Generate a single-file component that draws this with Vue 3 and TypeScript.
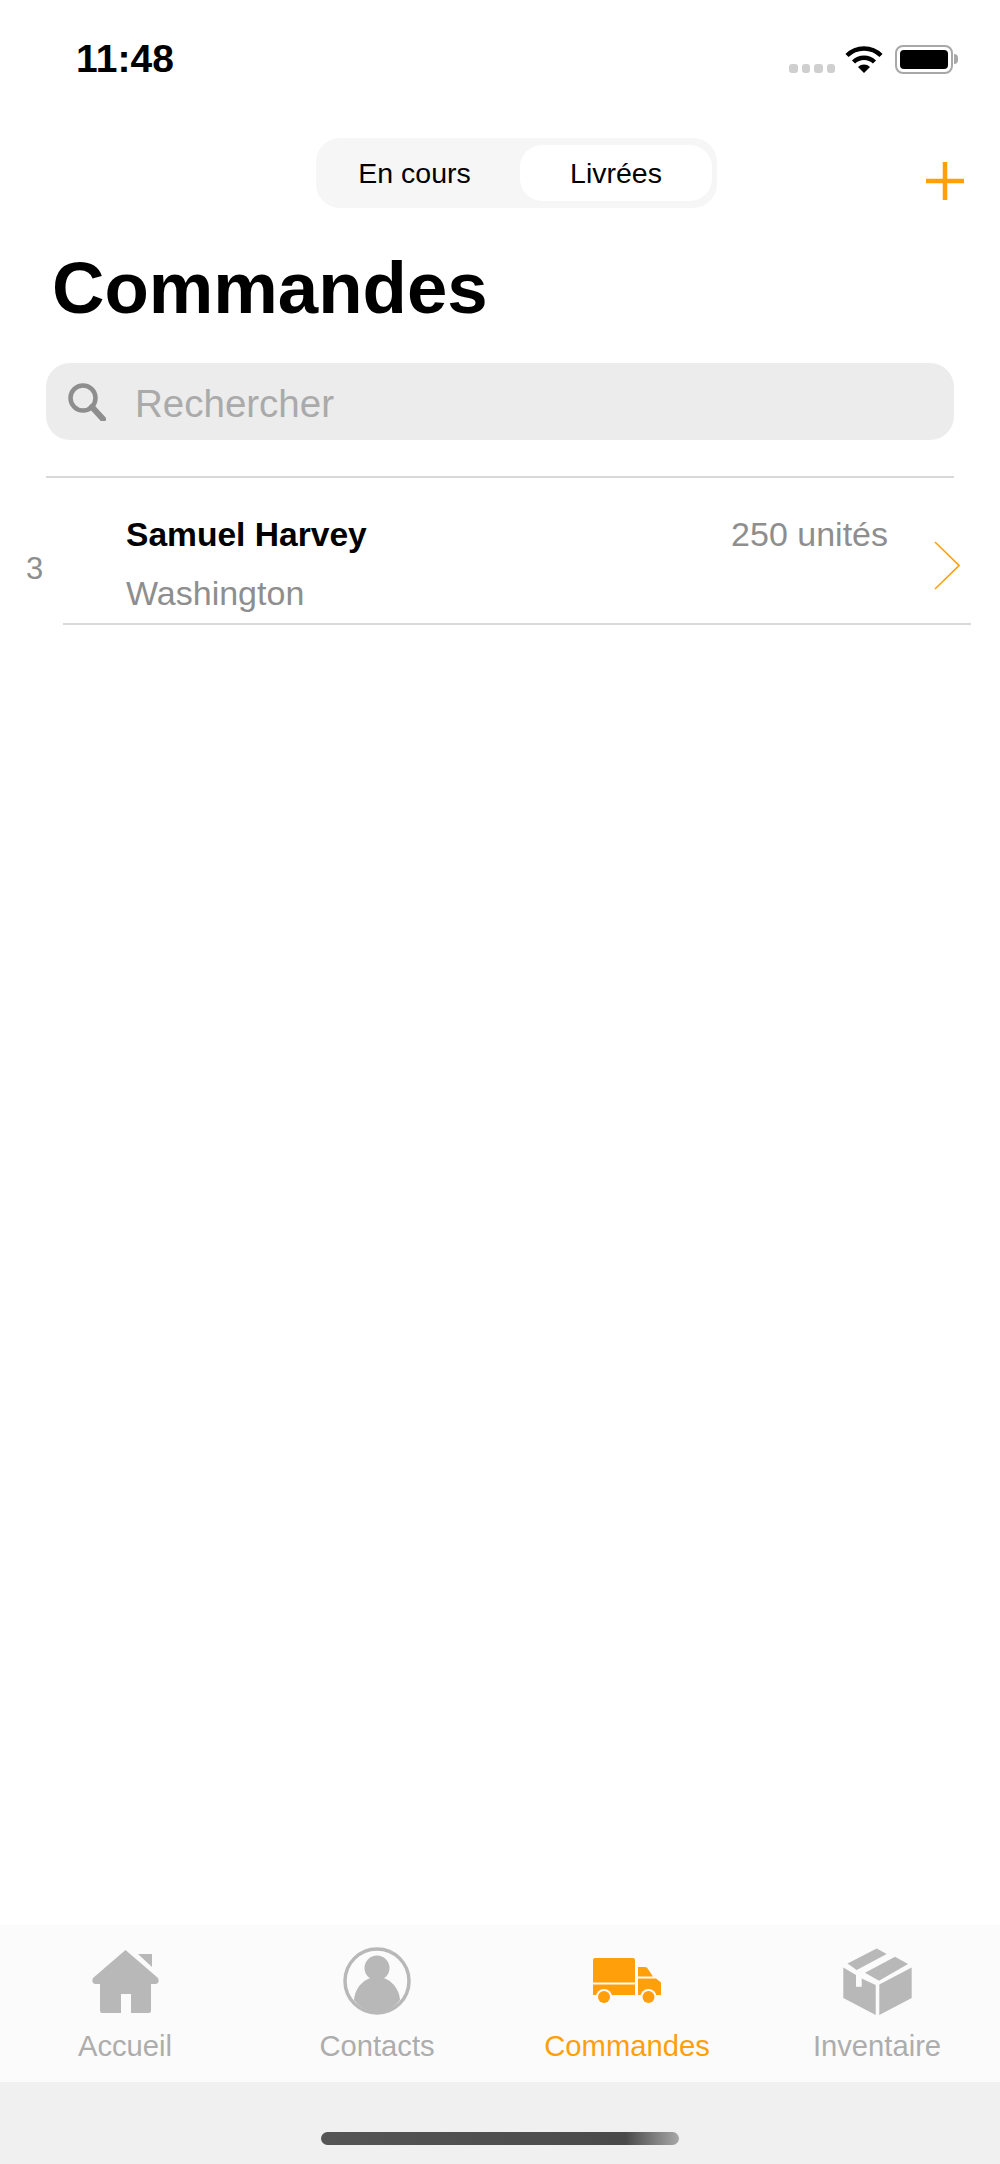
<template>
  <div class="screen">
    <header class="status-bar">
      <span class="time">11:48</span>
      <div class="status-icons">
        <div class="signal">
          <span v-for="n in 4" :key="n" class="signal-dot"></span>
        </div>
        <svg class="wifi" viewBox="0 0 38 28" width="38" height="28">
          <path d="M2 10.5A24 24 0 0 1 36 10.5" fill="none" stroke="#000" stroke-width="4.4" />
          <path d="M8.5 17A15 15 0 0 1 29.5 17" fill="none" stroke="#000" stroke-width="4.4" />
          <path d="M19 28L13 22A8.5 8.5 0 0 1 25 22Z" fill="#000" />
        </svg>
        <div class="battery">
          <div class="battery-body"><div class="battery-fill"></div></div>
          <div class="battery-nub"></div>
        </div>
      </div>
    </header>

    <nav class="top-nav">
      <div class="segmented">
        <button class="segment">En cours</button>
        <button class="segment active">Livrées</button>
      </div>
      <svg class="plus" viewBox="0 0 38 38" width="38" height="38">
        <path d="M19 0V38M0 19H38" stroke="#ff9f0a" stroke-width="4.5" />
      </svg>
    </nav>

    <h1 class="title">Commandes</h1>

    <div class="search">
      <svg class="search-icon" viewBox="0 0 38 38" width="38" height="38">
        <circle cx="15" cy="15" r="12.5" fill="none" stroke="#8e8e8e" stroke-width="4.5" />
        <path d="M24 24L35 36" stroke="#8e8e8e" stroke-width="6" stroke-linecap="round" />
      </svg>
      <span class="search-text">Rechercher</span>
    </div>

    <main class="list">
      <div class="row" v-for="order in orders" :key="order.name">
        <span class="row-index">{{ order.index }}</span>
        <div class="row-body">
          <div class="row-text">
            <div class="row-line">
              <span class="row-name">{{ order.name }}</span>
              <span class="row-qty">{{ order.quantity }}</span>
            </div>
            <span class="row-city">{{ order.city }}</span>
          </div>
          <svg class="chevron" viewBox="0 0 26 49" width="26" height="49">
            <path d="M1 1L25 24.5L1 48" fill="none" stroke="#ff9f0a" stroke-width="1.6" />
          </svg>
        </div>
      </div>
    </main>

    <footer class="tab-bar">
      <div v-for="tab in tabs" :key="tab.label" class="tab" :class="{ selected: tab.selected }">
        <div class="tab-icon">
          <svg v-if="tab.icon === 'home'" viewBox="0 0 67 63" width="67" height="63">
            <path fill="#b8b8b8" d="M33.5 0L66 28Q68 33 64 34H59V61Q59 63 57 63H39V44H29V63H10Q8 63 8 61V34H3Q-1 33 1 28Z" />
            <path fill="#b8b8b8" d="M46 4H60V17Z" />
          </svg>
          <svg v-else-if="tab.icon === 'contact'" viewBox="0 0 68 68" width="68" height="68">
            <circle cx="34" cy="34" r="32" fill="none" stroke="#b8b8b8" stroke-width="3.500" />
            <circle cx="34" cy="21" r="12.500" fill="#b8b8b8" />
            <path fill="#b8b8b8" d="M11 53C12 40 22 30 34 30C46 30 56 40 57 53C51 61 43 65 34 65C25 65 17 61 11 53Z" />
          </svg>
          <svg v-else-if="tab.icon === 'truck'" viewBox="0 0 68 47" width="68" height="47">
            <path fill="#ff9f0a" d="M2 0H40Q42 0 42 2V24.500H0V2Q0 0 2 0Z" />
            <path fill="#ff9f0a" d="M0 26.500H42V37H0Z" />
            <path fill="#ff9f0a" d="M45 9H52Q54 9 55 11L60 18.500H45Z" />
            <path fill="#ff9f0a" d="M45 20.500H63L68 24.500V37H45Z" />
            <circle cx="11" cy="39" r="8" fill="#fdfbfc" />
            <circle cx="55.500" cy="39" r="8" fill="#fdfbfc" />
            <circle cx="11" cy="39" r="6" fill="#ff9f0a" />
            <circle cx="55.500" cy="39" r="6" fill="#ff9f0a" />
          </svg>
          <svg v-else viewBox="0 0 69 67" width="69" height="67">
            <path fill="#b8b8b8" d="M4.500 15.500L33.700 0.500L43.700 6L13.700 22Z" />
            <path fill="#b8b8b8" d="M22 24.700L52 8.700L65 16L36 32.700Z" />
            <path fill="#b8b8b8" d="M0.300 19.500L13 27V38.700H18.700V30.500L32.700 37V67L0.300 50Z" />
            <path fill="#b8b8b8" d="M36.300 36.500L68.700 19.500V50L36.300 67Z" />
          </svg>
        </div>
        <span class="tab-label">{{ tab.label }}</span>
      </div>
    </footer>

    <div class="home-area">
      <div class="home-indicator"></div>
    </div>
  </div>
</template>

<script setup lang="ts">
interface Order {
  index: number;
  name: string;
  city: string;
  quantity: string;
}

interface Tab {
  label: string;
  icon: 'home' | 'contact' | 'truck' | 'box';
  selected?: boolean;
}

const orders: Order[] = [
  { index: 3, name: 'Samuel Harvey', city: 'Washington', quantity: '250 unités' },
];

const tabs: Tab[] = [
  { label: 'Accueil', icon: 'home' },
  { label: 'Contacts', icon: 'contact' },
  { label: 'Commandes', icon: 'truck', selected: true },
  { label: 'Inventaire', icon: 'box' },
];
</script>

<style>
html,
body {
  margin: 0;
  background: #fff;
}
</style>

<style scoped>
.screen {
  width: 1000px;
  height: 2164px;
  display: flex;
  flex-direction: column;
  background: #fff;
  font-family: "Liberation Sans", Arial, sans-serif;
  color: #000;
  overflow: hidden;
}

.status-bar {
  height: 118px;
  flex: none;
  display: flex;
  align-items: center;
  justify-content: space-between;
  padding: 0 42px 0 76px;
  box-sizing: border-box;
}

.time {
  font-size: 39px;
  font-weight: 700;
  letter-spacing: 0.1px;
}

.status-icons {
  display: flex;
  align-items: center;
}

.signal {
  display: flex;
  gap: 4px;
  margin-top: 18px;
  margin-right: 10px;
}

.signal-dot {
  width: 8.500px;
  height: 9px;
  border-radius: 3px;
  background: #cfcfcf;
}

.wifi {
  margin-top: 0;
  margin-right: 12px;
}

.battery {
  display: flex;
  align-items: center;
}

.battery-body {
  width: 58px;
  height: 29px;
  box-sizing: border-box;
  border: 2px solid #a8a8a8;
  border-radius: 8px;
  padding: 3px;
}

.battery-fill {
  width: 100%;
  height: 100%;
  background: #000;
  border-radius: 4px;
}

.battery-nub {
  width: 4px;
  height: 10px;
  margin-left: 1px;
  background: #a8a8a8;
  border-radius: 0 4px 4px 0;
}

.top-nav {
  margin-top: 20px;
  height: 70px;
  flex: none;
  display: flex;
  padding-left: 316px;
}

.segmented {
  width: 401px;
  height: 70px;
  box-sizing: border-box;
  padding: 7px 5px 7px 7px;
  display: flex;
  background: #f6f6f6;
  border-radius: 24px;
}

.segment {
  flex: 1;
  border: 0;
  padding: 0 14px 0 0;
  background: transparent;
  font: inherit;
  font-size: 28.500px;
  color: #000;
  border-radius: 22px;
}

.segment.active {
  flex: none;
  width: 192px;
  padding: 0;
  background: #fff;
}

.plus {
  margin: 24px 0 0 209px;
  flex: none;
}

.title {
  margin: 36px 0 0;
  padding-left: 52px;
  font-size: 72.600px;
  line-height: 88px;
  font-weight: 700;
}

.search {
  margin: 31px 46px 0;
  height: 77px;
  flex: none;
  display: flex;
  align-items: center;
  padding-left: 22px;
  background: #ececec;
  border-radius: 24px;
}

.search-icon {
  flex: none;
}

.search-text {
  margin-left: 29px;
  padding-top: 5px;
  font-size: 38.500px;
  color: #aaa;
}

.list {
  flex: 1;
  margin-top: 36px;
  display: flex;
  flex-direction: column;
}

.list::before {
  content: "";
  height: 2px;
  margin: 0 46px;
  background: #d9d9d9;
}

.row {
  display: flex;
  align-items: center;
  padding: 0 29px 0 26px;
}

.row-index {
  width: 18px;
  flex: none;
  margin-top: 34px;
  font-size: 31px;
  color: #8e8e8e;
}

.row-body {
  flex: 1;
  margin-left: 19px;
  height: 147px;
  box-sizing: border-box;
  padding-left: 63px;
  display: flex;
  align-items: center;
  border-bottom: 2px solid #d9d9d9;
}

.row-text {
  flex: 1;
  display: flex;
  flex-direction: column;
  gap: 20px;
  margin-top: 26px;
}

.row-line {
  display: flex;
  justify-content: space-between;
  padding-right: 46px;
}

.row-name {
  font-size: 33.600px;
  line-height: 39px;
  font-weight: 700;
}

.row-qty {
  font-size: 34px;
  line-height: 39px;
  color: #8e8e8e;
}

.row-city {
  font-size: 34px;
  line-height: 39px;
  color: #8e8e8e;
}

.chevron {
  flex: none;
  margin-right: 11px;
  margin-top: 30px;
}

.tab-bar {
  height: 157px;
  flex: none;
  display: grid;
  grid-template-columns: repeat(4, 250px);
  background: #fbfbfb;
  color: #adadad;
}

.tab {
  display: flex;
  flex-direction: column;
  align-items: center;
}

.tab:nth-child(n + 2) {
  transform: translateX(2px);
}

.tab.selected {
  color: #ff9f0a;
}

.tab-icon {
  height: 94px;
  display: flex;
  align-items: center;
  padding-top: 18px;
  box-sizing: border-box;
}

.tab-label {
  font-size: 29.200px;
  line-height: 34px;
  margin-top: 10px;
}

.home-area {
  flex: none;
  height: 82px;
  display: flex;
  justify-content: center;
  padding-top: 50px;
  box-sizing: border-box;
  background: #f0f0f0;
}

.home-indicator {
  width: 358px;
  height: 13px;
  border-radius: 7px;
  background: linear-gradient(90deg, #555 0%, #4a4a4a 85%, #a8a8a8 100%);
}
</style>
